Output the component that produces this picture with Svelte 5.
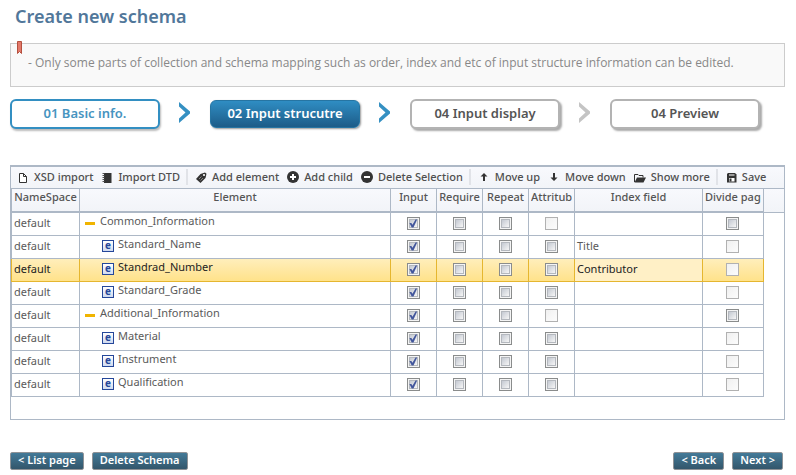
<script>
  const steps = [
    { label: '01 Basic info.', state: 'done' },
    { label: '02 Input strucutre', state: 'active' },
    { label: '04 Input display', state: 'todo' },
    { label: '04 Preview', state: 'todo' },
  ];

  const tools = [
    [['doc', 'XSD import'], ['book', 'Import DTD']],
    [['tag', 'Add element'], ['plus', 'Add child'], ['minus', 'Delete Selection']],
    [['up', 'Move up'], ['down', 'Move down'], ['folder', 'Show more']],
    [['save', 'Save']],
  ];

  const flags = ['Input', 'Require', 'Repeat', 'Attritube'];

  let rows = $state([
    { name: 'Common_Information', group: true, index: '' },
    { name: 'Standard_Name', index: 'Title' },
    { name: 'Standrad_Number', index: 'Contributor' },
    { name: 'Standard_Grade', index: '' },
    { name: 'Additional_Information', group: true, index: '' },
    { name: 'Material', index: '' },
    { name: 'Instrument', index: '' },
    { name: 'Qualification', index: '' },
  ]);
  let selected = $state(2);
</script>

{#snippet icon(kind)}
  <svg class="icon" viewBox="0 0 12 12" width="12" height="12" aria-hidden="true">
    {#if kind === 'doc'}
      <path d="M2.500 2.500h4L9.500 5.500V11.500H2.500z" fill="#fff" stroke="#333" />
      <path d="M6.500 2.500v3h3" fill="none" stroke="#333" />
    {:else if kind === 'book'}
      <path d="M3 2h7.500v10H3z" fill="#333" />
      <path d="M1.500 2.500h2M1.500 4.500h2M1.500 6.500h2M1.500 8.500h2M1.500 10.500h2" stroke="#555" />
    {:else if kind === 'tag'}
      <path d="M1 8 5.500 3 10 1.500l1.500 1.200-1 4.300L5.500 12z" fill="#333" />
      <circle cx="9" cy="4" r="1.100" fill="#fff" />
      <path d="M4 8 6.500 5.500M5.500 9.500 8 7" stroke="#aaa" stroke-width=".7" />
    {:else if kind === 'plus' || kind === 'minus'}
      <circle cx="6" cy="6" r="6" fill="#333" />
      <path d={kind === 'plus' ? 'M3 6h6M6 3v6' : 'M3 6h6'} stroke="#fff" stroke-width="2" />
    {:else if kind === 'up' || kind === 'down'}
      <path
        d={kind === 'up' ? 'M6 2 9.500 5.500H7V10H5V5.500H2.500z' : 'M6 10 9.500 6.500H7V2H5v4.500H2.500z'}
        fill="#333"
      />
    {:else if kind === 'folder'}
      <path d="M.5 11V3.500h3.500l1 1h4v2" fill="none" stroke="#333" />
      <path d="M.5 11.500 3 6.500h9L9.500 11.500z" fill="#333" />
    {:else}
      <path d="M3 2h7l1.500 1.500v8H2V3z" fill="#333" />
      <path d="M4 3.500h5.500v1H4zM4 7h5.500v3.500H4z" fill="#fff" />
      <path d="M4.500 7.500h2v3h-2z" fill="#333" />
    {/if}
  </svg>
{/snippet}

<main>
  <h1>Create new schema</h1>

  <div class="notice">
    <svg class="mark" viewBox="0 0 5 13" width="5" height="13" aria-hidden="true">
      <path d="M.5.5h4v12l-2-2-2 2z" fill="#e3796a" stroke="#b4503f" />
    </svg>
    <p>- Only some parts of collection and schema mapping such as order, index and etc of input structure information can be edited.</p>
  </div>

  <nav class="steps" aria-label="Steps">
    {#each steps as step, i}
      {#if i}
        <svg class="arrow" class:off={i === 3} viewBox="0 0 11 21" width="11" height="21" aria-hidden="true">
          <path d="M0 0 11 9.500v2L0 21v-4.500l6.500-6L0 4.500z" />
        </svg>
      {/if}
      <button type="button" class="step {step.state}">{step.label}</button>
    {/each}
  </nav>

  <section class="grid">
    <div class="toolbar" role="toolbar" aria-label="Schema tools">
      {#each tools as group}
        <div class="group">
          {#each group as [kind, label]}
            <button type="button">{@render icon(kind)}{label}</button>
          {/each}
        </div>
      {/each}
    </div>

    <table>
      <colgroup>
        <col class="c-ns" /><col />
        {#each flags as _}<col class="c-flag" />{/each}
        <col class="c-index" /><col class="c-divide" /><col class="c-rest" />
      </colgroup>
      <thead>
        <tr>
          <th><div>NameSpace</div></th>
          <th><div>Element</div></th>
          {#each flags as flag}<th><div>{flag}</div></th>{/each}
          <th><div>Index field</div></th>
          <th><div>Divide page</div></th>
          <td class="rest"></td>
        </tr>
      </thead>
      <tbody>
        {#each rows as row, r}
          <tr class:selected={r === selected} onclick={() => (selected = r)}>
            <td>default</td>
            <td>
              <div class="node" class:child={!row.group}>
                {#if row.group}<i class="dash"></i>{:else}<b class="leaf">e</b>{/if}
                <span>{row.name}</span>
              </div>
            </td>
            {#each flags as flag, f}
              <td class="check">
                <input
                  type="checkbox"
                  checked={f === 0}
                  disabled={f === 3 && row.group}
                  aria-label="{flag} {row.name}"
                />
              </td>
            {/each}
            <td class="index">{row.index}</td>
            <td class="check">
              <input type="checkbox" disabled={!row.group} aria-label="Divide page {row.name}" />
            </td>
            <td class="rest"></td>
          </tr>
        {/each}
      </tbody>
    </table>
  </section>

  <footer>
    <button type="button">&lt; List page</button>
    <button type="button">Delete Schema</button>
    <button type="button" class="push">&lt; Back</button>
    <button type="button">Next &gt;</button>
  </footer>
</main>

<style>
  :global(body) {
    margin: 0;
    background: #fff;
  }
  main {
    padding: 4px 11px 0 10px;
    font: 11px/16px 'Noto Sans', 'Open Sans', sans-serif;
    color: #5a5a5a;
  }
  button {
    font: inherit;
    margin: 0;
    cursor: pointer;
    white-space: nowrap;
  }
  h1 {
    margin: 0 0 15px 5px;
    font-size: 18px;
    line-height: 24px;
    font-weight: 600;
    color: #51779a;
  }
  .notice {
    position: relative;
    border: 1px solid #ccc;
    background: #f9f9f9;
    padding: 11px 17px 15px;
  }
  .notice p {
    margin: 0;
    font-family: 'Open Sans', 'Noto Sans', sans-serif;
    font-size: 12px;
    color: #888;
  }
  .mark {
    position: absolute;
    left: 6px;
    top: -3px;
  }

  .steps {
    display: flex;
    align-items: center;
    margin: 12px 0 36px;
  }
  .step {
    box-sizing: border-box;
    width: 150px;
    height: 30px;
    padding: 0 0 3px;
    border: 2px solid #b3b3b3;
    border-radius: 6px;
    background: #fff;
    box-shadow: 2px 2px 2px #aaa;
    font-size: 13px;
    font-weight: 600;
    color: #555;
  }
  .step.done {
    border-color: #338fc2;
    color: #4794c0;
    box-shadow: 1px 2px 2px #bbb;
  }
  .step.active {
    height: 28px;
    border: 1px solid #2675a3;
    background: linear-gradient(#2f8dc3, #1d5c88);
    color: #fff;
    box-shadow: 1px 1px 2px #999;
  }
  .arrow {
    margin: -4px 20px 0 19px;
    fill: #3590c2;
  }
  .arrow.off {
    fill: #c4c4c4;
  }

  .grid {
    border: 1px solid #adb8c6;
    border-top-width: 2px;
    padding-bottom: 22px;
  }
  .toolbar {
    display: flex;
    align-items: center;
    box-sizing: border-box;
    height: 22px;
    padding: 0 0 1px 6px;
    background: linear-gradient(#f8f9fd, #f2f4f8);
    border-bottom: 1px solid #adb8c6;
  }
  .group {
    display: flex;
    gap: 8px;
  }
  .group + .group {
    margin-left: 6px;
    padding-left: 7px;
    border-left: 2px solid #e1e3e8;
  }
  .toolbar button {
    display: flex;
    align-items: center;
    gap: 5px;
    padding: 0;
    border: 0;
    background: none;
    color: #4f4f4f;
    font-weight: 500;
  }
  .icon {
    flex: none;
  }

  table {
    width: 100%;
    table-layout: fixed;
    border-spacing: 0;
  }
  .c-ns { width: 69px; }
  .c-flag { width: 46px; }
  .c-index { width: 128px; }
  .c-divide { width: 61px; }
  .c-rest { width: 20px; }
  th,
  td {
    box-sizing: border-box;
    height: 23px;
    padding: 0 2px 2px;
    border: solid #adb8c6;
    border-width: 0 1px 1px 0;
    text-align: left;
    white-space: nowrap;
  }
  th:first-child,
  td:first-child {
    border-left-width: 1px;
  }
  thead th,
  thead td {
    height: 24px;
    background: linear-gradient(#f8f9fd, #f2f4f8);
    border-bottom-width: 2px;
    vertical-align: top;
    font-weight: 500;
    color: #555;
  }
  thead td.rest {
    border-width: 0 0 1px;
  }
  th div {
    overflow: hidden;
    text-align: center;
  }
  tbody .rest {
    border: 0;
  }
  .node {
    display: flex;
    align-items: center;
    gap: 5px;
    height: 20px;
    padding-left: 3px;
  }
  .node.child {
    gap: 4px;
    padding-left: 20px;
  }
  .node span {
    padding-bottom: 4px;
  }
  .dash {
    width: 10px;
    height: 3px;
    background: #f0b400;
  }
  .leaf {
    box-sizing: border-box;
    width: 12px;
    height: 12px;
    border: 1px solid #25479a;
    background: linear-gradient(#fff, #cfdaf0);
    color: #25479a;
    font-size: 10px;
    line-height: 9px;
    text-align: center;
  }
  .check {
    padding: 0 1px 1px 0;
    text-align: center;
  }
  .check input {
    appearance: none;
    position: relative;
    display: block;
    box-sizing: border-box;
    width: 13px;
    height: 13px;
    margin: 0 auto;
    padding: 1px;
    border: 1px solid #8a8c8c;
    background: #f4f4f4;
  }
  .check input::before {
    content: '';
    display: block;
    box-sizing: border-box;
    height: 9px;
    border: 1px solid #b4b8be;
    background: linear-gradient(135deg, #c4c9d2, #f6f6f6);
  }
  .check input:disabled {
    border-color: #b1b1b1;
    background: linear-gradient(135deg, #f0f0f0, #fcfcfc);
  }
  .check input:disabled::before {
    display: none;
  }
  .check input:checked::after {
    content: '';
    position: absolute;
    inset: 1px;
    background: #42569c;
    clip-path: polygon(10% 45%, 32% 45%, 44% 65%, 78% 5%, 96% 5%, 55% 95%, 36% 95%);
  }
  .selected td:not(.rest) {
    border-color: #e5b62f;
    background: linear-gradient(#ffeebb, #ffe28a);
    color: #222;
  }
  .selected td.index {
    background: #fff0c6;
  }

  footer {
    display: flex;
    gap: 8px;
    margin-top: 32px;
    padding-right: 2px;
  }
  footer button {
    height: 18px;
    padding: 0 7px 2px;
    border: 1px solid #8f9296;
    border-radius: 2px;
    background: linear-gradient(#437a98, #33566b);
    color: #fff;
    font-weight: 600;
    line-height: 14px;
  }
  .push {
    margin-left: auto;
  }
</style>
